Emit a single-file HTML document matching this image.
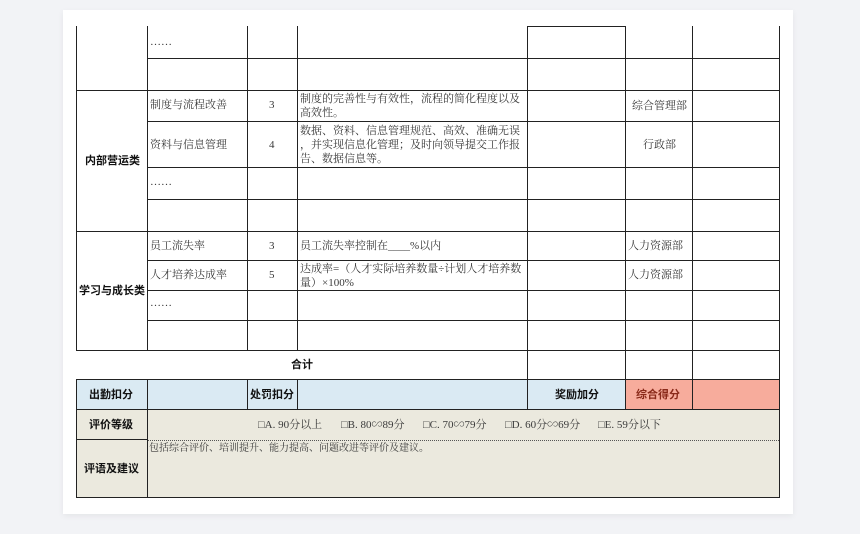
<!DOCTYPE html>
<html><head><meta charset="utf-8"><style>
body{margin:0;width:860px;height:534px;background:#f2f3f6;position:relative;overflow:hidden;font-family:"Liberation Serif","Noto Serif CJK SC",serif;color:#3a3a3a}
.card{position:absolute;left:63px;top:10px;width:730px;height:504px;background:#fff;box-shadow:0 2px 6px rgba(0,0,0,.06)}
.h{position:absolute;height:1.2px;background:#222}
.v{position:absolute;width:1.2px;background:#222}
.t{position:absolute;font-size:11px;line-height:14px;white-space:nowrap}
.b{font-family:"Liberation Sans","Noto Sans CJK SC",sans-serif;font-weight:bold;color:#111;font-size:11px}
.bg{position:absolute}
</style></head><body>
<div class="card"></div>
<div class="bg" style="left:76px;top:380px;width:549px;height:30px;background:#daeaf3"></div>
<div class="bg" style="left:625px;top:380px;width:155px;height:30px;background:#f7ac9c"></div>
<div class="bg" style="left:76px;top:410px;width:704px;height:88px;background:#ebe9de"></div>
<div class="bg" style="left:148px;top:440px;width:631px;height:0;border-top:1px dotted #555"></div>
<div class="bg" style="left:148px;top:497px;width:631px;height:0;border-top:1px dotted #555"></div>
<!-- horizontals -->
<div class="h" style="left:527px;top:26px;width:98px"></div>
<div class="h" style="left:147px;top:58px;width:633px"></div>
<div class="h" style="left:76px;top:90px;width:704px"></div>
<div class="h" style="left:147px;top:121px;width:633px"></div>
<div class="h" style="left:147px;top:167px;width:633px"></div>
<div class="h" style="left:147px;top:199px;width:633px"></div>
<div class="h" style="left:76px;top:231px;width:704px"></div>
<div class="h" style="left:147px;top:260px;width:633px"></div>
<div class="h" style="left:147px;top:290px;width:633px"></div>
<div class="h" style="left:147px;top:320px;width:633px"></div>
<div class="h" style="left:76px;top:350px;width:704px"></div>
<div class="h" style="left:76px;top:379px;width:704px"></div>
<div class="h" style="left:76px;top:409px;width:704px"></div>
<div class="h" style="left:76px;top:439px;width:72px"></div>
<div class="h" style="left:76px;top:497px;width:704px"></div>
<!-- verticals -->
<div class="v" style="left:76px;top:26px;height:325px"></div>
<div class="v" style="left:76px;top:379px;height:119px"></div>
<div class="v" style="left:147px;top:26px;height:325px"></div>
<div class="v" style="left:147px;top:379px;height:119px"></div>
<div class="v" style="left:247px;top:26px;height:325px"></div>
<div class="v" style="left:247px;top:379px;height:31px"></div>
<div class="v" style="left:297px;top:26px;height:325px"></div>
<div class="v" style="left:297px;top:379px;height:31px"></div>
<div class="v" style="left:527px;top:26px;height:384px"></div>
<div class="v" style="left:625px;top:26px;height:384px"></div>
<div class="v" style="left:692px;top:26px;height:384px"></div>
<div class="v" style="left:779px;top:26px;height:472px"></div>
<!-- text -->
<div class="t" style="left:150px;top:35px">……</div>
<div class="t" style="left:150px;top:98px">制度与流程改善</div>
<div class="t" style="left:269px;top:98px">3</div>
<div class="t" style="left:300px;top:92px">制度的完善性与有效性，流程的简化程度以及<br>高效性。</div>
<div class="t" style="left:632px;top:99px">综合管理部</div>
<div class="t" style="left:150px;top:138px">资料与信息管理</div>
<div class="t" style="left:269px;top:138px">4</div>
<div class="t" style="left:300px;top:124px">数据、资料、信息管理规范、高效、准确无误<br>，并实现信息化管理；及时向领导提交工作报<br>告、数据信息等。</div>
<div class="t" style="left:643px;top:138px">行政部</div>
<div class="t b" style="left:85px;top:154px">内部营运类</div>
<div class="t" style="left:150px;top:175px">……</div>
<div class="t" style="left:150px;top:239px">员工流失率</div>
<div class="t" style="left:269px;top:239px">3</div>
<div class="t" style="left:300px;top:239px">员工流失率控制在____%以内</div>
<div class="t" style="left:628px;top:239px">人力资源部</div>
<div class="t" style="left:150px;top:268px">人才培养达成率</div>
<div class="t" style="left:269px;top:268px">5</div>
<div class="t" style="left:300px;top:262px">达成率=（人才实际培养数量÷计划人才培养数<br>量）×100%</div>
<div class="t" style="left:628px;top:268px">人力资源部</div>
<div class="t b" style="left:79px;top:284px">学习与成长类</div>
<div class="t" style="left:150px;top:296px">……</div>
<div class="t b" style="left:291px;top:358px">合计</div>
<div class="t b" style="left:89px;top:388px">出勤扣分</div>
<div class="t b" style="left:250px;top:388px">处罚扣分</div>
<div class="t b" style="left:555px;top:388px">奖励加分</div>
<div class="t b" style="left:636px;top:388px;color:#8a2a1a">综合得分</div>
<div class="t b" style="left:89px;top:418px">评价等级</div>
<div class="t" style="left:258px;top:418px">□A. 90分以上</div>
<div class="t" style="left:341px;top:418px">□B. 80∽89分</div>
<div class="t" style="left:423px;top:418px">□C. 70∽79分</div>
<div class="t" style="left:505px;top:418px">□D. 60分∽69分</div>
<div class="t" style="left:598px;top:418px">□E. 59分以下</div>
<div class="t" style="left:149px;top:442px;font-size:10px">包括综合评价、培训提升、能力提高、问题改进等评价及建议。</div>
<div class="t b" style="left:84px;top:462px">评语及建议</div>
</body></html>
